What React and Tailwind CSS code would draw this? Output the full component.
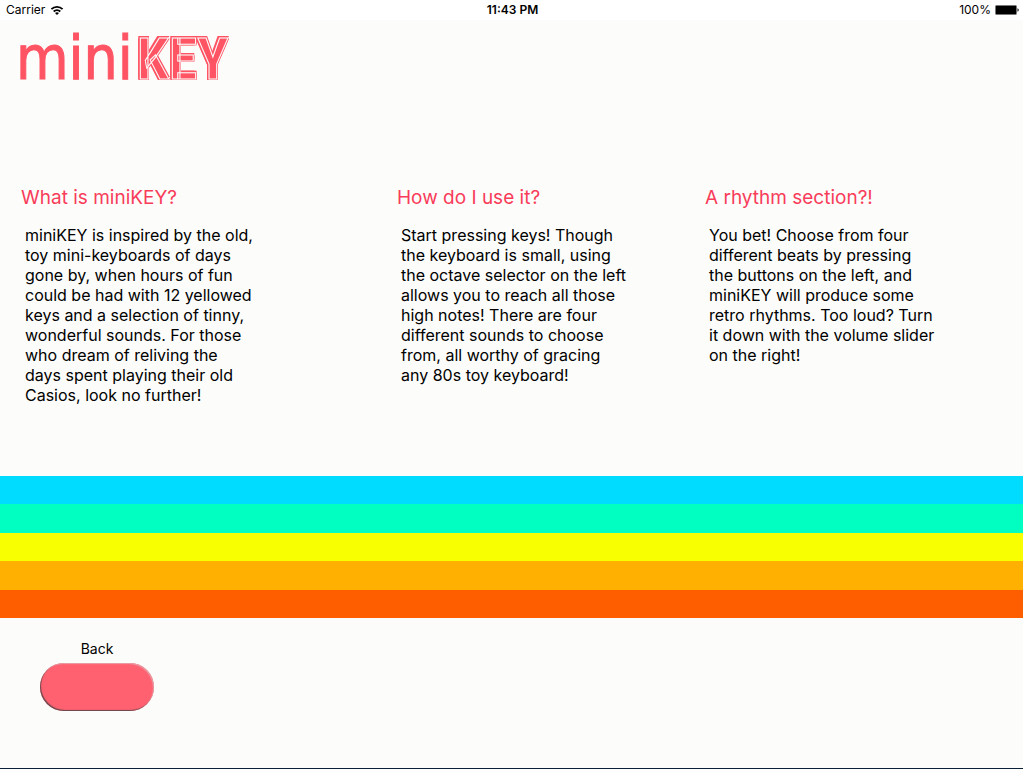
const sections = [
  {
    title: 'What is miniKEY?',
    body: 'miniKEY is inspired by the old, toy mini-keyboards of days gone by, when hours of fun could be had with 12 yellowed keys and a selection of tinny, wonderful sounds. For those who dream of reliving the days spent playing their old Casios, look no further!',
  },
  {
    title: 'How do I use it?',
    body: 'Start pressing keys! Though the keyboard is small, using the octave selector on the left allows you to reach all those high notes! There are four different sounds to choose from, all worthy of gracing any 80s toy keyboard!',
  },
  {
    title: 'A rhythm section?!',
    body: 'You bet! Choose from four different beats by pressing the buttons on the left, and miniKEY will produce some retro rhythms. Too loud? Turn it down with the volume slider on the right!',
  },
];

const stripes = ['bg-[#00dcff]', 'bg-[#00ffc0]', 'bg-[#f8ff00]', 'bg-[#ffb000]', 'bg-[#ff5e00]'];

function StatusBar() {
  return (
    <div className="grid h-5 grid-cols-3 items-center bg-white pr-1 pl-1.5 text-xs text-black">
      <div className="flex items-center gap-1">
        <span>Carrier</span>
        <svg className="h-3 w-4" viewBox="0 0 16 12" fill="none" stroke="black" strokeWidth="1.8" aria-hidden="true">
          <path d="M2.4 5.1a8 8 0 0 1 11.2 0" />
          <path d="M4.7 7.5a4.8 4.8 0 0 1 6.6 0" />
          <path d="M8 11 6 9.1a3 3 0 0 1 4 0z" fill="black" stroke="none" />
        </svg>
      </div>
      <div className="text-center font-semibold">11:43 PM</div>
      <div className="flex items-center justify-end gap-1">
        <span>100%</span>
        <svg className="h-2.5 w-6" viewBox="0 0 24 10" aria-hidden="true">
          <rect x="0.5" y="0.5" width="21" height="9" rx="1" fill="black" stroke="#777" />
          <path d="M22.5 3.2c1.6.6 1.6 3 0 3.6z" fill="black" />
        </svg>
      </div>
    </div>
  );
}

function Logo() {
  return (
    <h1 className="flex items-baseline pl-4 text-[#ff5464]">
      <span className="font-['DejaVu_Sans_Condensed','DejaVu_Sans',sans-serif] text-[60px] leading-[76px] [-webkit-text-stroke:1px_#ff5464]">mini</span>
      <span className="flex gap-px pl-1 font-['Roboto_Condensed',Roboto,sans-serif] text-[58px] leading-[76px] font-semibold [-webkit-text-stroke:1px_#fcfcfa] [text-shadow:-2px_0_#ff5464,1px_0_#ff5464,0_-2px_#ff5464,0_1px_#ff5464,-2px_-2px_#ff5464,1px_-2px_#ff5464,-2px_1px_#ff5464,1px_1px_#ff5464]">KEY</span>
    </h1>
  );
}

export default function App() {
  return (
    <div className="flex min-h-screen flex-col border-b border-[#0b2035] bg-[#fcfcfa] font-['Inter',sans-serif] text-black">
      <StatusBar />
      <header className="h-40">
        <Logo />
      </header>
      <main className="grid h-[296px] grid-cols-[376fr_308fr_339fr]">
        {sections.map((s) => (
          <section key={s.title} className="pl-[21px]">
            <h2 className="text-[19px] leading-9 text-[#f83c5a]">{s.title}</h2>
            <p className="mt-[9px] w-[234px] pl-1 text-base leading-5">{s.body}</p>
          </section>
        ))}
      </main>
      <div aria-hidden="true">
        {stripes.map((c, i) => (
          <div key={c} className={`${c} ${i % 2 ? 'h-[29px]' : 'h-7'}`} />
        ))}
      </div>
      <footer className="flex px-10 pt-[21px]">
        <div className="flex flex-col items-center gap-1">
          <label htmlFor="back" className="text-sm">Back</label>
          <button
            id="back"
            type="button"
            className="h-12 w-[114px] rounded-full bg-[#ff6170] shadow-[inset_1px_-1px_1px_#64484c,inset_-1px_1px_1px_#e6a0a8]"
          />
        </div>
      </footer>
    </div>
  );
}
